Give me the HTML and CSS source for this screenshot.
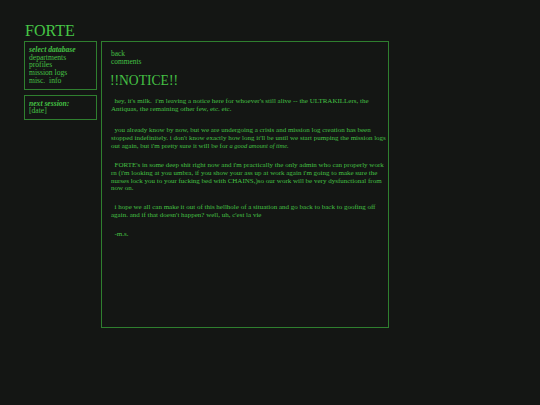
FILE: index.html
```html
<!DOCTYPE html>
<html>
<head>
<meta charset="utf-8">
<link rel="stylesheet" href="styles.css">
</head>
<body>
<div class="page">
  <h1 class="title">FORTE</h1>
  <div class="layout">
    <div class="sidebar">
      <div class="box">
        <div class="box-head">select database</div>
        <div>departments</div>
        <div>profiles</div>
        <div>mission logs</div>
        <div>misc.&nbsp; info</div>
      </div>
      <div class="box box-small">
        <div class="box-head">next session:</div>
        <div>[date]</div>
      </div>
    </div>
    <div class="main">
      <div class="nav">
        <div>back</div>
        <div>comments</div>
      </div>
      <h2 class="notice">!!NOTICE!!</h2>
      <p class="para para-first">&nbsp; hey, it's milk.&nbsp; i'm leaving a notice here for whoever's still alive -- the ULTRAKILLers, the<br>Antiquas, the remaining other few, etc. etc.</p>
      <p class="para">&nbsp; you already know by now, but we are undergoing a crisis and mission log creation has been<br>stopped indefinitely. i don't know exactly how long it'll be until we start pumping the mission logs<br>out again, but i'm pretty sure it will be for <em class="soft">a good amount of time.</em></p>
      <p class="para">&nbsp; FORTE's in some deep shit right now and i'm practically the only admin who can properly work<br>rn (i'm looking at you umbra, if you show your ass up at work again i'm going to make sure the<br>nurses lock you to your fucking bed with CHAINS,)so our work will be very dysfunctional from<br>now on.</p>
      <p class="para">&nbsp; i hope we all can make it out of this hellhole of a situation and go back to back to goofing off<br>again. and if that doesn't happen? well, uh, c'est la vie</p>
      <p class="para">&nbsp; -m.s.</p>
    </div>
  </div>
</div>
</body>
</html>
```
FILE: styles.css
```css
html, body {
  margin: 0;
  padding: 0;
  background: #141614;
}
body {
  font-family: "Liberation Serif", "Times New Roman", serif;
  color: #44c044;
  width: 540px;
  height: 405px;
  overflow: hidden;
}
.page {
  padding: 21px 0 0 24px;
}
.title {
  margin: 0 0 0 1px;
  font-size: 16px;
  font-weight: normal;
  line-height: 20px;
  height: 20px;
  color: #46c646;
}
.layout {
  display: flex;
  gap: 4px;
}
.sidebar {
  display: flex;
  flex-direction: column;
  gap: 5px;
  width: 73px;
}
.box {
  border: 1px solid #2f7f2f;
  padding: 4px;
  font-size: 7.6px;
  line-height: 7.7px;
}
.box-head {
  font-style: italic;
  font-weight: bold;
}
.main {
  width: 274px;
  height: 267px;
  border: 1px solid #2f7f2f;
  padding: 8px 3px 10px 9px;
}
.nav {
  font-size: 7.4px;
  line-height: 8px;
}
.notice {
  margin: 6px 0 9px -1px;
  font-size: 13.6px;
  font-weight: normal;
  line-height: 17px;
}
.para {
  margin: 0 0 11.2px 0;
  font-size: 7px;
  line-height: 7.7px;
  white-space: nowrap;
}
.para-first {
  margin-bottom: 13.6px;
}
.soft {
  font-size: 6.4px;
}
```
